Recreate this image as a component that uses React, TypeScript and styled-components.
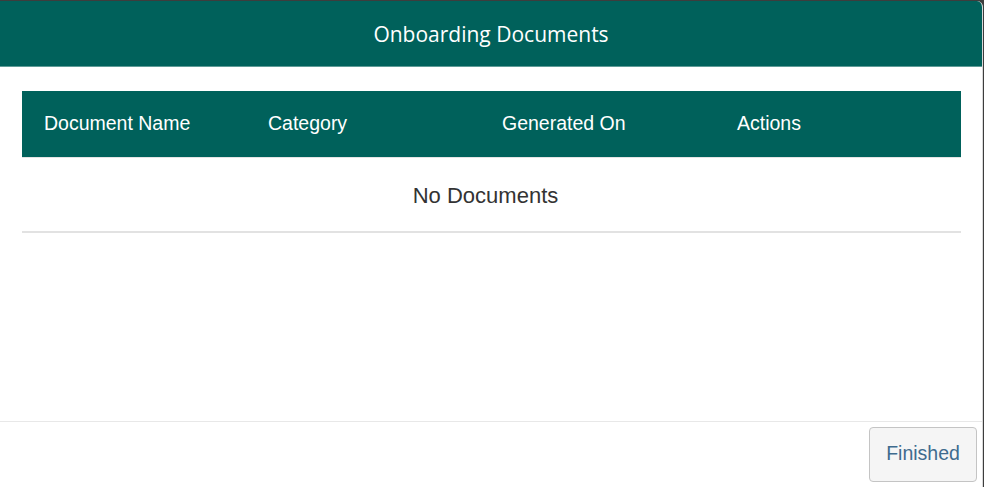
import React from "react";
import styled, { createGlobalStyle } from "styled-components";

const GlobalStyle = createGlobalStyle`
  html, body {
    margin: 0;
    padding: 0;
    background: #3d3d3d;
  }
  body {
    font-family: "Liberation Sans", Arial, sans-serif;
  }
`;

const Modal = styled.div`
  margin-top: 1px;
  width: 983px;
  height: 486px;
  background: #fff;
  border-top-right-radius: 6px;
  border-right: 1px solid #d9d9d9;
  box-sizing: border-box;
  display: flex;
  flex-direction: column;
  overflow: hidden;
`;

const Header = styled.div`
  height: 66px;
  flex: none;
  background: #00615b;
  border-bottom: 1px solid #5f9b97;
  display: flex;
  align-items: center;
  justify-content: center;
  color: #fff;
  font-family: "Open Sans", sans-serif;
  font-size: 21px;
  box-sizing: border-box;
`;

const Body = styled.div`
  flex: 1;
  padding: 24px 21px 0 22px;
`;

const Table = styled.div`
  width: 939px;
`;

const HeadRow = styled.div`
  display: grid;
  grid-template-columns: 224px 234px 235px 1fr;
  height: 66px;
  align-items: center;
  background: #00615b;
  border-bottom: 1px solid #e4e4e4;
`;

const HeadCell = styled.div`
  padding-left: 22px;
  padding-bottom: 2px;
  color: #fff;
  font-size: 19.5px;
`;

const EmptyRow = styled.div`
  height: 75px;
  display: flex;
  align-items: center;
  justify-content: center;
  padding-right: 12px;
  padding-top: 2px;
  box-sizing: border-box;
  border-bottom: 2px solid #e2e2e2;
  color: #333;
  font-size: 22px;
`;

const Footer = styled.div`
  height: 66px;
  flex: none;
  border-top: 1px solid #e8e8e8;
  display: flex;
  align-items: center;
  justify-content: flex-end;
  padding-right: 5px;
  box-sizing: border-box;
`;

const Button = styled.button`
  width: 108px;
  height: 55px;
  background: #f5f5f5;
  border: 1px solid #c4c4c4;
  border-radius: 4px;
  color: #3e6b8e;
  font-family: "Liberation Sans", Arial, sans-serif;
  font-size: 19.5px;
  padding-bottom: 3px;
  cursor: pointer;
`;

const columns = ["Document Name", "Category", "Generated On", "Actions"];

export default function App() {
  return (
    <>
      <GlobalStyle />
      <Modal>
        <Header>Onboarding Documents</Header>
        <Body>
          <Table>
            <HeadRow>
              {columns.map((c) => (
                <HeadCell key={c}>{c}</HeadCell>
              ))}
            </HeadRow>
            <EmptyRow>No Documents</EmptyRow>
          </Table>
        </Body>
        <Footer>
          <Button>Finished</Button>
        </Footer>
      </Modal>
    </>
  );
}
